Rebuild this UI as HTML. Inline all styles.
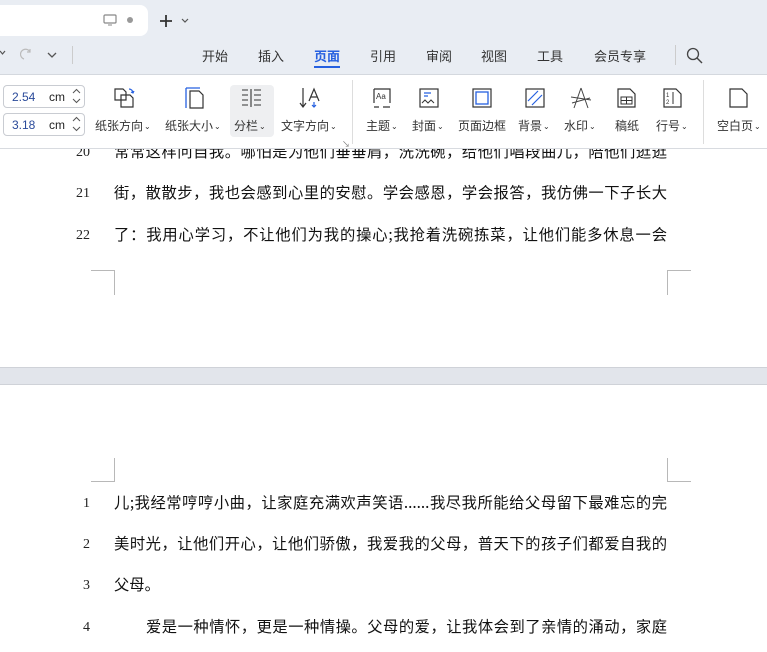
<!DOCTYPE html>
<html><head><meta charset="utf-8"><style>
*{margin:0;padding:0;box-sizing:border-box}
body{width:767px;height:652px;overflow:hidden;position:relative;background:#fff;font-family:"Liberation Sans","Noto Sans CJK SC",sans-serif;color:#222}
.a{position:absolute}
.top{left:0;top:0;width:767px;height:74px;background:#e9edf3;z-index:5}
.tabt{left:-10px;top:5px;width:158px;height:31px;background:#fff;border-radius:8px;z-index:6}
.tab{top:46px;font-size:13px;color:#333;z-index:6}
.rib{left:0;top:74px;width:767px;height:75px;background:#fff;border-top:1px solid #d4d8de;border-bottom:1px solid #d8dbe0;z-index:5}
.lbl{font-size:12px;color:#333;top:117px;white-space:nowrap;z-index:6}
.car{font-size:8px;vertical-align:1px;margin-left:1px}
.inp{left:3px;width:82px;height:23px;border:1px solid #c9ccd2;border-radius:4px;font-size:12px;z-index:6}
.inp span{position:absolute;top:4px}
.line{position:absolute;left:114px;width:553px;font-size:15.3px;text-align:justify;text-align-last:justify;white-space:nowrap;color:#111;font-family:"Noto Sans CJK SC",sans-serif;line-height:20px}
.num{position:absolute;font-family:"Liberation Serif",serif;font-size:14px;color:#222;line-height:20px}
.mk{position:absolute;background:#b8b8b8}
svg{position:absolute;z-index:7}
</style></head><body>
<div class="a top"></div>
<div class="a tabt"></div>
<svg style="left:103px;top:14px" width="14" height="12" viewBox="0 0 14 12"><rect x="1" y="1" width="12" height="8" rx="1" fill="none" stroke="#888" stroke-width="1.2"/><path d="M5 11h4" stroke="#888"/></svg>
<div class="a" style="left:127px;top:17px;width:6px;height:6px;border-radius:3px;background:#999;z-index:7"></div>
<svg style="left:158px;top:13px" width="16" height="16"><path d="M8 2v12M2 8h12" stroke="#333" stroke-width="1.8"/></svg>
<svg style="left:181px;top:18px" width="8" height="6"><path d="M1 1l3 3 3-3" stroke="#555" fill="none" stroke-width="1.2"/></svg>
<svg style="left:0;top:50px" width="6" height="6"><path d="M0 1l2.5 3 2.5-3" stroke="#555" fill="none" stroke-width="1.2"/></svg>
<svg style="left:20px;top:47px" width="14" height="14"><path d="M4 12a5 5 0 1 1 6-7M10 2v3h-3" stroke="#bbb" fill="none" stroke-width="1.2"/></svg>
<svg style="left:47px;top:52px" width="10" height="6"><path d="M1 1l4 4 4-4" stroke="#555" fill="none" stroke-width="1.3"/></svg>
<div class="a" style="left:72px;top:46px;width:1px;height:18px;background:#ccc;z-index:6"></div>
<div class="a tab" style="left:202px">开始</div>
<div class="a tab" style="left:258px">插入</div>
<div class="a tab" style="left:314px;color:#2660e0;font-weight:bold">页面</div>
<div class="a" style="left:314px;top:66px;width:26px;height:2px;background:#2660e0;z-index:6"></div>
<div class="a tab" style="left:370px">引用</div>
<div class="a tab" style="left:426px">审阅</div>
<div class="a tab" style="left:481px">视图</div>
<div class="a tab" style="left:537px">工具</div>
<div class="a tab" style="left:594px">会员专享</div>
<div class="a" style="left:675px;top:45px;width:1px;height:20px;background:#ccc;z-index:6"></div>
<svg style="left:686px;top:47px" width="18" height="18"><circle cx="7" cy="7" r="5.5" stroke="#444" fill="none" stroke-width="1.3"/><path d="M11 11l5 5" stroke="#444" stroke-width="1.4"/></svg>

<div class="a rib"></div>
<div class="a inp" style="top:85px"><span style="left:8px;color:#2a4a9a">2.54</span><span style="left:45px">cm</span></div>
<div class="a inp" style="top:113px"><span style="left:8px;color:#2a4a9a">3.18</span><span style="left:45px">cm</span></div>
<svg style="left:72px;top:87px" width="9" height="18"><path d="M1 6l3.5-3.5L8 6M1 12l3.5 3.5L8 12" stroke="#555" fill="none"/></svg>
<svg style="left:72px;top:115px" width="9" height="18"><path d="M1 6l3.5-3.5L8 6M1 12l3.5 3.5L8 12" stroke="#555" fill="none"/></svg>

<svg style="left:113px;top:87px" width="24" height="22"><path d="M2 2h8l3 3v8H2z M8 8h9l3 3v9H8z" stroke="#333" fill="#fff" stroke-width="1.2"/><path d="M16 2a4 4 0 0 1 4 4M18 5l2 1 1-2" stroke="#2660e0" fill="none" stroke-width="1.2"/></svg>
<div class="a lbl" style="left:95px">纸张方向<span class="car">⌄</span></div>
<svg style="left:184px;top:87px" width="22" height="22"><path d="M2 1h14M2 1v20" stroke="#2660e0" stroke-width="1.3"/><path d="M6 4h9l4 4v13H6z" stroke="#333" fill="none" stroke-width="1.2"/></svg>
<div class="a lbl" style="left:165px">纸张大小<span class="car">⌄</span></div>
<div class="a" style="left:230px;top:85px;width:44px;height:52px;background:#eeeff1;border-radius:4px;z-index:6"></div>
<svg style="left:241px;top:88px" width="22" height="20"><path d="M1 2h6M1 7h6M1 12h6M1 17h6M10 1v18M13 2h7M13 7h7M13 12h7M13 17h7" stroke="#333" stroke-width="1.1"/></svg>
<div class="a lbl" style="left:234px">分栏<span class="car">⌄</span></div>
<svg style="left:299px;top:87px" width="24" height="22"><path d="M4 1v18M1 16l3 4 3-4" stroke="#333" fill="none" stroke-width="1.2"/><path d="M10 14l5-12 5 12M12 10h6" stroke="#333" fill="none" stroke-width="1.2"/><path d="M15 15v5M13 18l2 2 2-2" stroke="#2660e0" fill="none" stroke-width="1.2"/></svg>
<div class="a lbl" style="left:281px">文字方向<span class="car">⌄</span></div>
<div class="a" style="left:342px;top:139px;font-size:8px;color:#777;z-index:6">↘</div>
<div class="a" style="left:352px;top:80px;width:1px;height:64px;background:#ddd;z-index:6"></div>

<svg style="left:372px;top:88px" width="20" height="20"><path d="M2 1h16v14M2 1v14M2 19h5M11 19h7" stroke="#333" fill="none" stroke-width="1.2"/><text x="4" y="11" font-size="8" font-family="Liberation Sans" fill="#333">Aa</text></svg>
<div class="a lbl" style="left:366px">主题<span class="car">⌄</span></div>
<svg style="left:419px;top:88px" width="20" height="20"><rect x="1" y="1" width="18" height="18" fill="none" stroke="#333" stroke-width="1.2"/><path d="M5 5h7M5 8h4" stroke="#2660e0" stroke-width="1.2"/><path d="M3 15l3-3 3 3 3-3 3 3" stroke="#333" fill="none"/></svg>
<div class="a lbl" style="left:412px">封面<span class="car">⌄</span></div>
<svg style="left:472px;top:88px" width="20" height="20"><rect x="1" y="1" width="18" height="18" fill="none" stroke="#333" stroke-width="1.2"/><rect x="4" y="4" width="12" height="12" fill="none" stroke="#2660e0" stroke-width="1.3"/></svg>
<div class="a lbl" style="left:458px">页面边框</div>
<svg style="left:525px;top:88px" width="20" height="20"><rect x="1" y="1" width="18" height="18" fill="none" stroke="#333" stroke-width="1.2"/><path d="M3 13l10-10M7 17l10-10" stroke="#2660e0" stroke-width="1.2"/></svg>
<div class="a lbl" style="left:518px">背景<span class="car">⌄</span></div>
<svg style="left:570px;top:87px" width="22" height="22"><path d="M11 1l-7 20M11 1l7 20M1 10l20 3M2 16l18-5" stroke="#444" fill="none" stroke-width="1"/></svg>
<div class="a lbl" style="left:564px">水印<span class="car">⌄</span></div>
<svg style="left:617px;top:88px" width="20" height="20"><path d="M1 1h12l5 5v13H1z" fill="none" stroke="#333" stroke-width="1.2"/><path d="M4 9h11v7H4zM4 12.5h11M9.5 9v7" stroke="#333" fill="none"/></svg>
<div class="a lbl" style="left:615px">稿纸</div>
<svg style="left:663px;top:88px" width="20" height="20"><path d="M1 1h12l5 5v13H1z" fill="none" stroke="#333" stroke-width="1.2"/><path d="M10 4v12" stroke="#333"/><text x="3" y="9" font-size="6" fill="#333">1</text><text x="3" y="16" font-size="6" fill="#333">2</text></svg>
<div class="a lbl" style="left:656px">行号<span class="car">⌄</span></div>
<div class="a" style="left:703px;top:80px;width:1px;height:64px;background:#ddd;z-index:6"></div>
<svg style="left:729px;top:88px" width="20" height="20"><path d="M1 1h12l5 5v13H1z" fill="none" stroke="#333" stroke-width="1.2"/></svg>
<div class="a lbl" style="left:717px">空白页<span class="car">⌄</span></div>

<div class="num" style="left:76px;top:143px">20</div>
<div class="line" style="top:141px">常常这样问自我。哪怕是为他们垂垂肩，洗洗碗，给他们唱段曲儿，陪他们逛逛</div>
<div class="num" style="left:76px;top:184px">21</div>
<div class="line" style="top:182px">街，散散步，我也会感到心里的安慰。学会感恩，学会报答，我仿佛一下子长大</div>
<div class="num" style="left:76px;top:226px">22</div>
<div class="line" style="top:224px">了：我用心学习，不让他们为我的操心;我抢着洗碗拣菜，让他们能多休息一会</div>
<div class="mk" style="left:91px;top:270px;width:24px;height:1px"></div>
<div class="mk" style="left:114px;top:270px;width:1px;height:25px"></div>
<div class="mk" style="left:667px;top:270px;width:24px;height:1px"></div>
<div class="mk" style="left:667px;top:270px;width:1px;height:25px"></div>

<div class="a" style="left:0;top:367px;width:767px;height:18px;background:#e2e5eb;border-top:1px solid #cfd2d8;border-bottom:1px solid #cfd2d8"></div>

<div class="mk" style="left:114px;top:458px;width:1px;height:24px"></div>
<div class="mk" style="left:91px;top:481px;width:24px;height:1px"></div>
<div class="mk" style="left:667px;top:458px;width:1px;height:24px"></div>
<div class="mk" style="left:667px;top:481px;width:24px;height:1px"></div>
<div class="num" style="left:83px;top:494px">1</div>
<div class="line" style="top:492px">儿;我经常哼哼小曲，让家庭充满欢声笑语......我尽我所能给父母留下最难忘的完</div>
<div class="num" style="left:83px;top:535px">2</div>
<div class="line" style="top:533px">美时光，让他们开心，让他们骄傲，我爱我的父母，普天下的孩子们都爱自我的</div>
<div class="num" style="left:83px;top:576px">3</div>
<div class="line" style="top:574px;text-align-last:left">父母。</div>
<div class="num" style="left:83px;top:618px">4</div>
<div class="line" style="top:616px;left:146px;width:521px">爱是一种情怀，更是一种情操。父母的爱，让我体会到了亲情的涌动，家庭</div>
</body></html>
